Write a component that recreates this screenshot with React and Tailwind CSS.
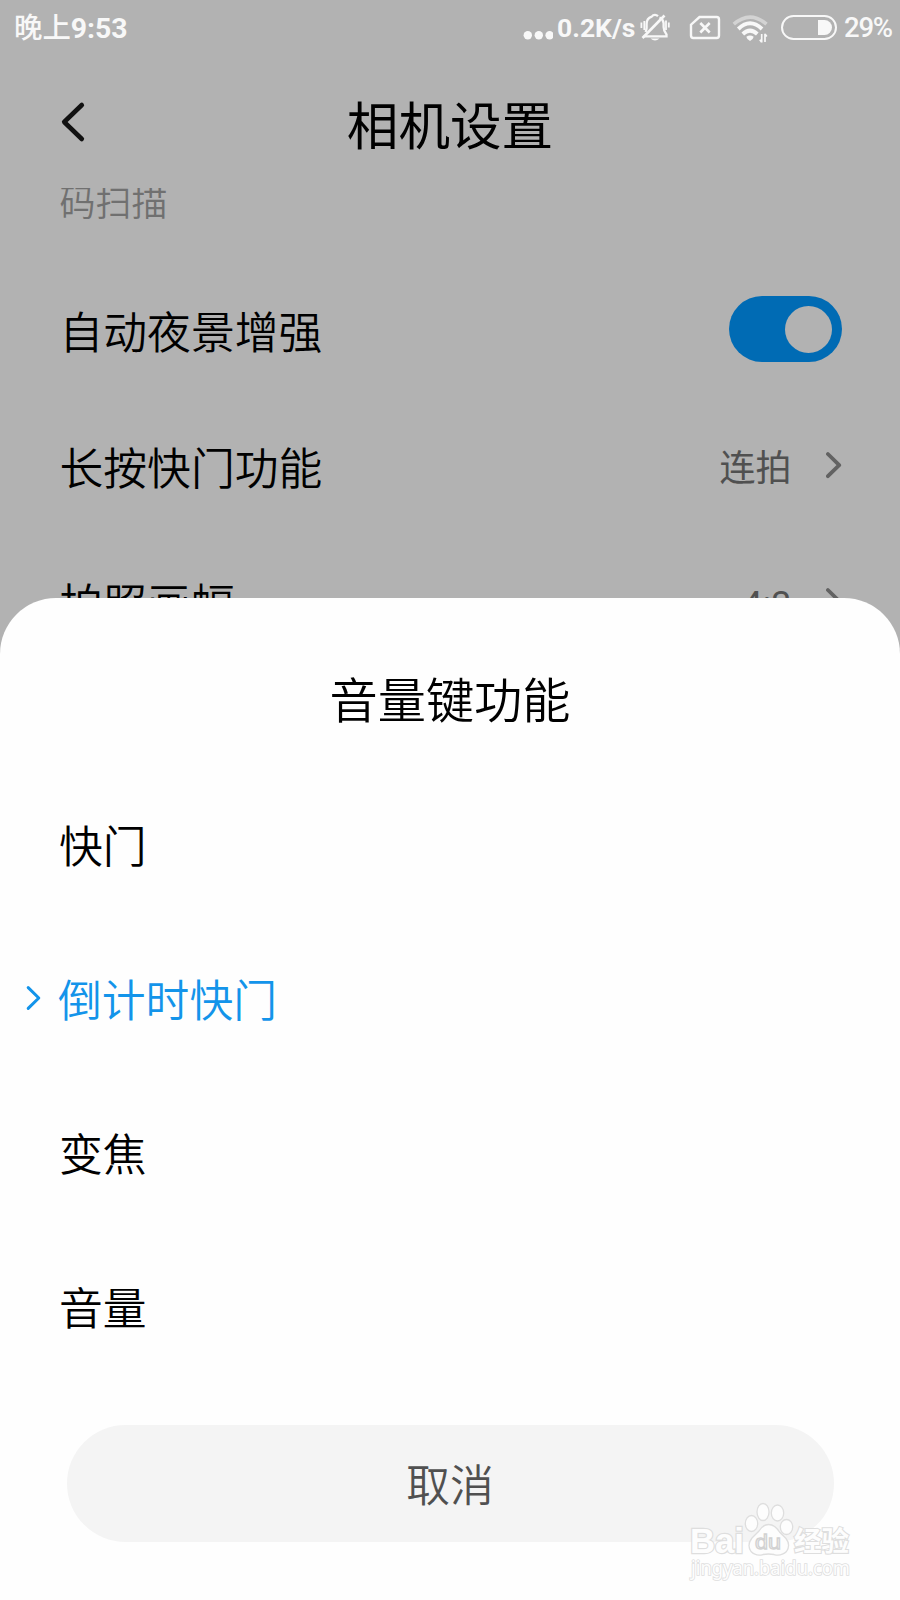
function StatusBar() {
  return (
    <div className="flex h-14 shrink-0 items-center pl-[14px] pr-[7px] text-[#f8f8f8]">
      <div className="mt-[2px] flex-1 whitespace-nowrap font-['Roboto','Noto_Sans_CJK_SC',sans-serif] text-[28.4px] leading-none font-bold">
        <span className="font-medium">晚上</span>9:53
      </div>
      <svg className="mr-[4px] h-10 w-[30px]" viewBox="523 8 30 40" fill="currentColor">
        <circle cx="527.8" cy="35.3" r="4.2" />
        <circle cx="538.8" cy="35.3" r="4.2" />
        <circle cx="549.6" cy="35.3" r="4.2" />
      </svg>
      <div className="mt-px w-[79px] whitespace-nowrap font-['Roboto',sans-serif] text-[26.5px] leading-none font-bold">0.2K/s</div>
      <svg className="h-10 w-[144px]" viewBox="636 8 144 40" fill="none" stroke="currentColor" strokeWidth="2.3">
        <path d="M645 35V36.4H666.5V34.5Q663.6 31 663.6 27V23Q663 18.8 659.5 17.5M658 16.2Q656.5 14.8 655 14.8Q653 14.8 651.7 16.6Q646.6 18.2 646.6 24V28Q646.3 30.5 645.5 32" />
        <path d="M642.5 38L664.5 15.5" strokeWidth="2.6" />
        <path d="M650.5 38.5Q655 42.5 659.5 38.5Z" fill="currentColor" stroke="none" />
        <path d="M644.3 21V30M641.4 22.5V28M666 20.5V30M668.8 22.5V27.5" strokeWidth="1.8" />
        <path d="M699.5 17H716.6Q719 17 719 19.4V35.6Q719 38 716.6 38H693.4Q691 38 691 35.6V24.7Z" strokeWidth="2.4" />
        <path d="M700.3 23L709.7 32.5M709.7 23L700.3 32.5" strokeWidth="2.6" />
        <path d="M733.8 24.2Q750 10 766.5 24.2" stroke="#d3d3d3" strokeWidth="3.6" />
        <path d="M738.3 29Q750 17.5 762 29" strokeWidth="3.9" />
        <path d="M742.8 34Q750 27.3 757.3 34" strokeWidth="3.9" />
        <path d="M746.3 36.7Q750 34.3 753.7 36.7Q753 40 750 41Q747 40 746.3 36.7Z" fill="currentColor" stroke="none" />
        <path d="M761.7 34V42.5M765 33.8V42M759.8 39.8L761.7 42.3M766.8 36.4L765 34" strokeWidth="1.7" />
      </svg>
      <div className="mt-[-2px] ml-[1px] flex h-[25px] w-[56px] items-center justify-end rounded-full border-2 border-[#f8f8f8] pr-[3px]">
        <div className="h-[15px] w-[14px] rounded-l-[2px] rounded-r-full bg-[#f8f8f8]" />
      </div>
      <div className="ml-[7px] w-[49px] whitespace-nowrap font-['Roboto',sans-serif] text-[27.5px] leading-none font-medium tracking-[-1.2px]">29%</div>
    </div>
  );
}

function Chevron() {
  return (
    <svg className="ml-[34px] h-7 w-[16px]" viewBox="0 0 16 28" fill="none" stroke="#626262" strokeWidth="3.8" strokeLinecap="round" strokeLinejoin="round">
      <path d="M1.9 3L13.2 14.2L1.9 25.2" />
    </svg>
  );
}

function Row({ label, value, children }) {
  return (
    <div className="flex h-[135.7px] shrink-0 items-center pr-[58.5px] pl-[59.5px]">
      <span className="flex-1 pt-[4px] text-[43.8px] leading-none font-[350]">{label}</span>
      {value && <span className="pt-[9px] font-['Roboto','Noto_Sans_CJK_SC',sans-serif] text-[36px] leading-none text-[#505050]">{value}</span>}
      {children}
    </div>
  );
}

function Option({ label, selected }) {
  return (
    <li className={selected ? "flex h-[154px] items-center text-[#1394ea]" : "flex h-[154px] items-center"}>
      <span className="flex w-[59px] shrink-0 pl-[26px]">
        {selected && (
          <svg className="mt-[3px] h-[26px] w-4" viewBox="0 0 16 26" fill="none" stroke="currentColor" strokeWidth="3" strokeLinecap="round" strokeLinejoin="round">
            <path d="M2.2 2.6L12.8 13L2.2 23.4" />
          </svg>
        )}
      </span>
      <span className={selected ? "-ml-px pt-[4px] text-[43.8px] leading-none font-[350]" : "pt-[4px] text-[43.8px] leading-none font-[350]"}>{label}</span>
    </li>
  );
}

function Watermark() {
  return (
    <svg className="absolute right-[42px] bottom-[12px] h-[88px] w-[176px] overflow-visible" viewBox="682 1500 176 88" fill="#fdfdfd" stroke="#dedede" strokeWidth="1.3">
      <g fontFamily="Liberation Sans, sans-serif" style={{ paintOrder: "stroke" }}>
        <text x="690" y="1553" fontSize="35" fontWeight="bold" textLength="54" lengthAdjust="spacingAndGlyphs" strokeWidth="2.4">Bai</text>
        <text x="794" y="1551" fontSize="27.5" fontWeight="bold" fontFamily="Noto Sans CJK SC, sans-serif" strokeWidth="2.2">经验</text>
        <text x="691" y="1575" fontSize="19" fontFamily="Noto Sans, sans-serif" textLength="159" lengthAdjust="spacingAndGlyphs" stroke="#dedede" strokeWidth="1.7">jingyan.baidu.com</text>
      </g>
      <ellipse cx="751.5" cy="1523.5" rx="6.2" ry="8" />
      <ellipse cx="763" cy="1512" rx="6" ry="8.5" />
      <ellipse cx="777.5" cy="1513" rx="6.2" ry="8" />
      <ellipse cx="786.5" cy="1527" rx="6.2" ry="7.5" />
      <path d="M768.5 1524.5Q775 1524.5 779.5 1532L786 1538.5Q791 1545 786.5 1551.5Q781 1556.5 774 1554.5Q768.5 1553.5 763 1554.5Q756 1556.5 751 1551.5Q746.5 1545 752 1538L759 1531Q763 1524.5 768.5 1524.5Z" />
      <text x="755" y="1549" fontSize="21" fontFamily="Liberation Sans, sans-serif" textLength="26" lengthAdjust="spacingAndGlyphs" stroke="#d2d2d2" strokeWidth="1.3">du</text>
    </svg>
  );
}

export default function App() {
  return (
    <div className="relative flex h-[1600px] w-[900px] flex-col overflow-hidden bg-[#b2b2b2] font-['Noto_Sans_CJK_SC',sans-serif] text-black">
      <StatusBar />
      <header className="flex h-[132px] shrink-0 items-center pr-[60px] pl-[60px]">
        <svg className="h-11 w-[26px]" viewBox="0 0 26 44" fill="none" stroke="#111" strokeWidth="4.6" strokeLinecap="round" strokeLinejoin="round">
          <path d="M21.8 5L4.2 22L21.8 39" />
        </svg>
        <h1 className="mr-[26px] flex-1 pt-[2px] text-center text-[51.6px] leading-none">相机设置</h1>
      </header>
      <main className="flex min-h-0 flex-1 flex-col overflow-hidden">
        <p className="-mt-[6px] h-[79.4px] shrink-0 pl-[59.5px] text-[36px] leading-[36px] font-[350] text-[#707070]">码扫描</p>
        <Row label="自动夜景增强">
          <span className="flex h-[66px] w-[113px] items-center justify-end rounded-full bg-[#006bb4] pr-[9.5px]">
            <span className="size-[47px] rounded-full bg-[#b2b2b2]" />
          </span>
        </Row>
        <Row label="长按快门功能" value="连拍">
          <Chevron />
        </Row>
        <Row label="拍照画幅" value="4:3">
          <Chevron />
        </Row>
      </main>
      <section className="absolute inset-x-0 bottom-0 flex h-[1002.5px] flex-col rounded-t-[56px] bg-[#fefefe]">
        <h2 className="flex h-[168px] items-center justify-center pt-[31px] text-[48.2px] leading-none font-[350]">音量键功能</h2>
        <ul className="flex flex-col">
          <Option label="快门" />
          <Option label="倒计时快门" selected />
          <Option label="变焦" />
          <Option label="音量" />
        </ul>
        <button className="mx-[66.5px] mt-[43.5px] flex h-[117px] items-center justify-center rounded-full bg-[#f4f4f4] pt-px text-[43.8px] leading-none font-[350] text-[#505050]">取消</button>
      </section>
      <Watermark />
    </div>
  );
}
